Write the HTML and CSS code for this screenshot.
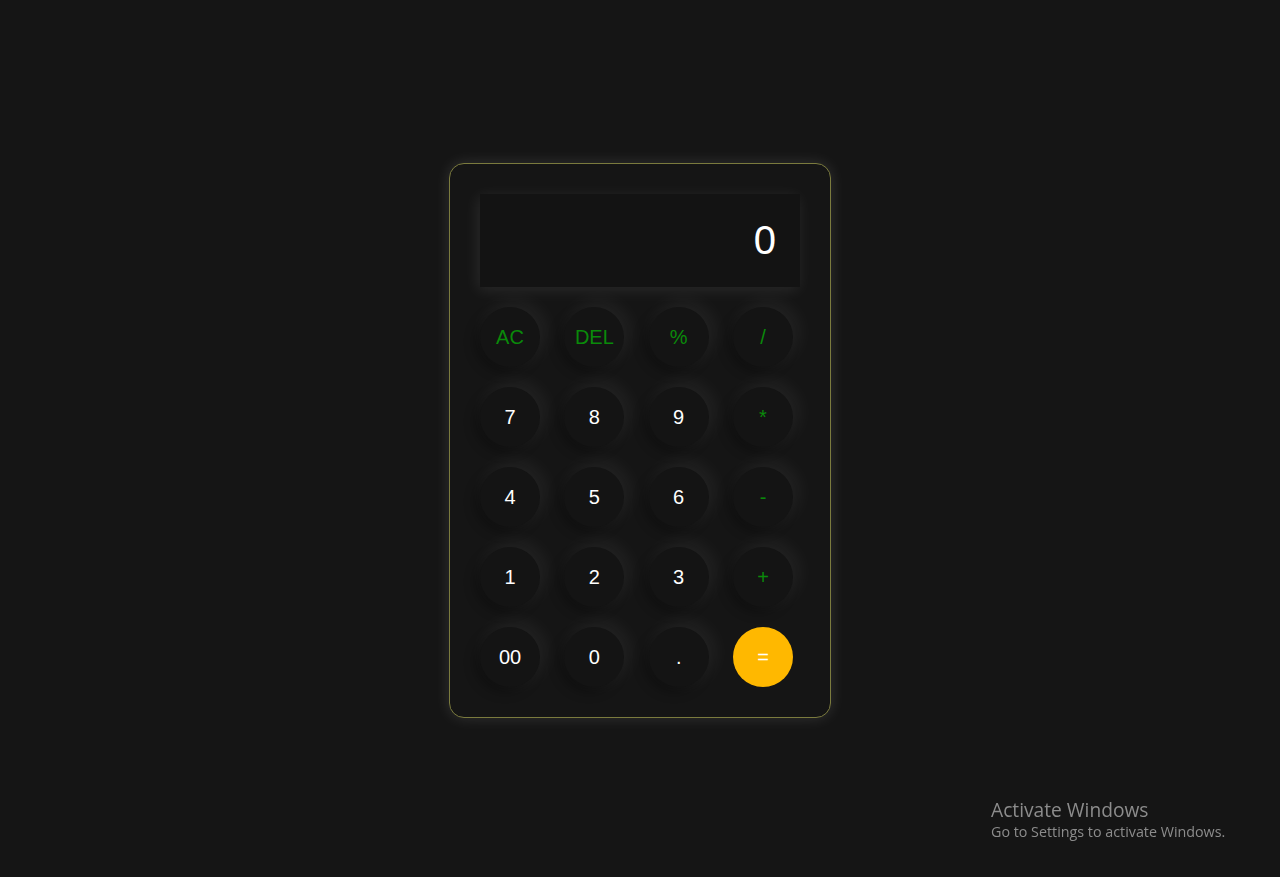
FILE: index.html
```html
<!DOCTYPE html>
<html>
<head>
<meta charset="utf-8">
<link rel="stylesheet" href="styles.css">
</head>
<body>
<div class="page">
  <div class="calc">
    <div class="display">0</div>
    <div class="keys">
      <button class="key op">AC</button>
      <button class="key op">DEL</button>
      <button class="key op">%</button>
      <button class="key op">/</button>
      <button class="key">7</button>
      <button class="key">8</button>
      <button class="key">9</button>
      <button class="key op">*</button>
      <button class="key">4</button>
      <button class="key">5</button>
      <button class="key">6</button>
      <button class="key op">-</button>
      <button class="key">1</button>
      <button class="key">2</button>
      <button class="key">3</button>
      <button class="key op">+</button>
      <button class="key">00</button>
      <button class="key">0</button>
      <button class="key">.</button>
      <button class="key eq">=</button>
    </div>
  </div>
</div>
<div class="activate">
  <div class="act-title">Activate Windows</div>
  <div class="act-sub">Go to Settings to activate Windows.</div>
</div>
</body>
</html>
```
FILE: styles.css
```css
html, body {
  margin: 0;
  padding: 0;
  height: 100%;
  background: #151515;
  font-family: "Liberation Sans", Arial, sans-serif;
}
.page {
  height: 100%;
  display: flex;
  align-items: center;
  justify-content: center;
}
.calc {
  width: 320px;
  padding: 30px;
  background: #151515;
  border: 1px solid #7b7b3e;
  border-radius: 15px;
  box-shadow: 0 0 15px rgba(255, 255, 255, 0.12);
  margin-top: 3px;
}
.display {
  height: 93px;
  box-sizing: border-box;
  background: #131313;
  color: #fff;
  font-size: 40px;
  display: flex;
  align-items: center;
  justify-content: flex-end;
  padding-right: 24px;
  box-shadow: -2px 3px 15px rgba(255, 255, 255, 0.09);
  margin-bottom: 20px;
}
.keys {
  display: grid;
  grid-template-columns: repeat(4, 60px);
  justify-content: start;
  column-gap: 24.33px;
  row-gap: 20px;
}
.key {
  width: 60px;
  height: 60px;
  border: none;
  border-radius: 50%;
  background: #141414;
  color: #fff;
  font-family: "Liberation Sans", Arial, sans-serif;
  font-size: 20px;
  padding: 2px 0 0;
  box-shadow: 5px -5px 20px rgba(255, 255, 255, 0.07), -5px 5px 12px rgba(0, 0, 0, 0.3);
}
.key.op {
  color: #0a8a0a;
}
.key.eq {
  background: #ffb800;
  color: #fff;
  box-shadow: none;
}
.activate {
  position: fixed;
  left: 991px;
  top: 797px;
  color: #8c8c8c;
  font-family: "Open Sans", "Noto Sans", sans-serif;
}
.act-title {
  font-size: 19.2px;
  line-height: 25px;
}
.act-sub {
  font-size: 14.3px;
  line-height: 20px;
}
```
